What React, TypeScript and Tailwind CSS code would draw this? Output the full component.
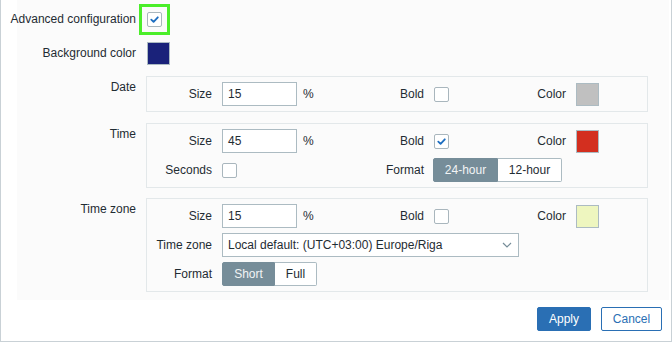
import type { ReactNode } from "react";

const FONT = "font-['Liberation_Sans',Arial,sans-serif]";

function Check({ checked = false }: { checked?: boolean }) {
  return (
    <span className="flex h-[15px] w-[15px] items-center justify-center rounded-[2px] border border-[#a9b6bd] bg-white">
      {checked && (
        <svg width="11" height="11" viewBox="0 0 12 12" fill="none" stroke="#1f6fc1" strokeWidth="2" strokeLinecap="round" strokeLinejoin="round">
          <polyline points="2.5 6.2 5 8.6 9.6 3.6" />
        </svg>
      )}
    </span>
  );
}

function Swatch({ color }: { color: string }) {
  return (
    <span
      className="block h-[23px] w-[23px] border border-[#acbbc2]"
      style={{ backgroundColor: color }}
    />
  );
}

function Input({ value }: { value: string }) {
  return (
    <span className="flex h-[24px] w-[75px] items-center border border-[#acbbc2] bg-white px-[5px]">
      {value}
    </span>
  );
}

function Segmented({ items, widths }: { items: string[]; widths: string[] }) {
  return (
    <div className="flex h-[24px] w-max">
      {items.map((it, i) => (
        <span
          key={it}
          className={`flex items-center justify-center border ${widths[i]} ${
            i === 0
              ? "rounded-l-[2px] border-[#768d99] bg-[#768d99] text-[#f2f4f5]"
              : "rounded-r-[2px] border-[#acbbc2] border-l-0 bg-white"
          }`}
        >
          {it}
        </span>
      ))}
    </div>
  );
}

function Label({ children }: { children: ReactNode }) {
  return <span className="justify-self-end whitespace-nowrap">{children}</span>;
}

function Box({ children }: { children: ReactNode }) {
  return (
    <div className="grid w-[502px] grid-cols-[65px_132px_60px_59px_63px_23px] items-center gap-x-[10px] gap-y-[5px] border border-[#e3e8ea] p-[5px] pl-0">
      {children}
    </div>
  );
}

function Row({ label, children, top }: { label: string; children: ReactNode; top?: boolean }) {
  return (
    <div className={`flex gap-[10px] ${top ? "items-start" : "items-center"}`}>
      <div className={`flex w-[119px] shrink-0 justify-end whitespace-nowrap ${top ? "pt-[4px]" : ""}`}>
        {label}
      </div>
      {children}
    </div>
  );
}

export default function App() {
  return (
    <div className={`${FONT} flex h-[342px] w-[672px] flex-col border-x border-b border-[#c9d1d6] bg-white text-[12px] leading-[14px] text-[#1f2c33]`}>
      {/* Form body */}
      <div className="ml-[16px] mr-[2px] h-[300px] bg-[#fbfbfb] pt-[7px]">
        <Row label="Advanced configuration">
          <div className="flex h-[24px] items-center pl-px">
            <span className="relative">
              <Check checked />
              <span className="absolute -inset-[8px] border-[3px] border-[#4bee2a]" />
            </span>
          </div>
        </Row>

        <div className="mt-[10px]">
          <Row label="Background color">
            <div className="flex h-[24px] items-center pl-px">
              <Swatch color="#1a227a" />
            </div>
          </Row>
        </div>

        <div className="mt-[11px]">
          <Row label="Date" top>
            <Box>
              <Label>Size</Label>
              <div className="flex items-center gap-[6px]">
                <Input value="15" />
                <span>%</span>
              </div>
              <Label>Bold</Label>
              <Check />
              <Label>Color</Label>
              <Swatch color="#c0c0c0" />
            </Box>
          </Row>
        </div>

        <div className="mt-[11px]">
          <Row label="Time" top>
            <Box>
              <Label>Size</Label>
              <div className="flex items-center gap-[6px]">
                <Input value="45" />
                <span>%</span>
              </div>
              <Label>Bold</Label>
              <Check checked />
              <Label>Color</Label>
              <Swatch color="#d32f1f" />

              <Label>Seconds</Label>
              <Check />
              <Label>Format</Label>
              <div className="col-span-3 -ml-px">
                <Segmented items={["24-hour", "12-hour"]} widths={["w-[65px]", "w-[64px]"]} />
              </div>
            </Box>
          </Row>
        </div>

        <div className="mt-[10px]">
          <Row label="Time zone" top>
            <Box>
              <Label>Size</Label>
              <div className="flex items-center gap-[6px]">
                <Input value="15" />
                <span>%</span>
              </div>
              <Label>Bold</Label>
              <Check />
              <Label>Color</Label>
              <Swatch color="#eef6bf" />

              <Label>Time zone</Label>
              <div className="col-span-5">
                <span className="flex h-[24px] w-[297px] items-center justify-between border border-[#acbbc2] bg-white pl-[5px] pr-[6px]">
                  Local default: (UTC+03:00) Europe/Riga
                  <svg width="10" height="6" viewBox="0 0 10 6" fill="none" stroke="#768d99" strokeWidth="1.2">
                    <polyline points="1 1 5 5 9 1" />
                  </svg>
                </span>
              </div>

              <Label>Format</Label>
              <div className="col-span-5">
                <Segmented items={["Short", "Full"]} widths={["w-[53px]", "w-[42px]"]} />
              </div>
            </Box>
          </Row>
        </div>
      </div>

      {/* Footer */}
      <div className="flex justify-end gap-[10px] pr-[9px] pt-[7px]">
        <button className="h-[24px] w-[54px] rounded-[2px] border border-[#2a6fb4] bg-[#2a6fb4] text-white">
          Apply
        </button>
        <button className="h-[24px] w-[61px] rounded-[2px] border border-[#2a6fb4] bg-white text-[#2a6fb4]">
          Cancel
        </button>
      </div>
    </div>
  );
}
